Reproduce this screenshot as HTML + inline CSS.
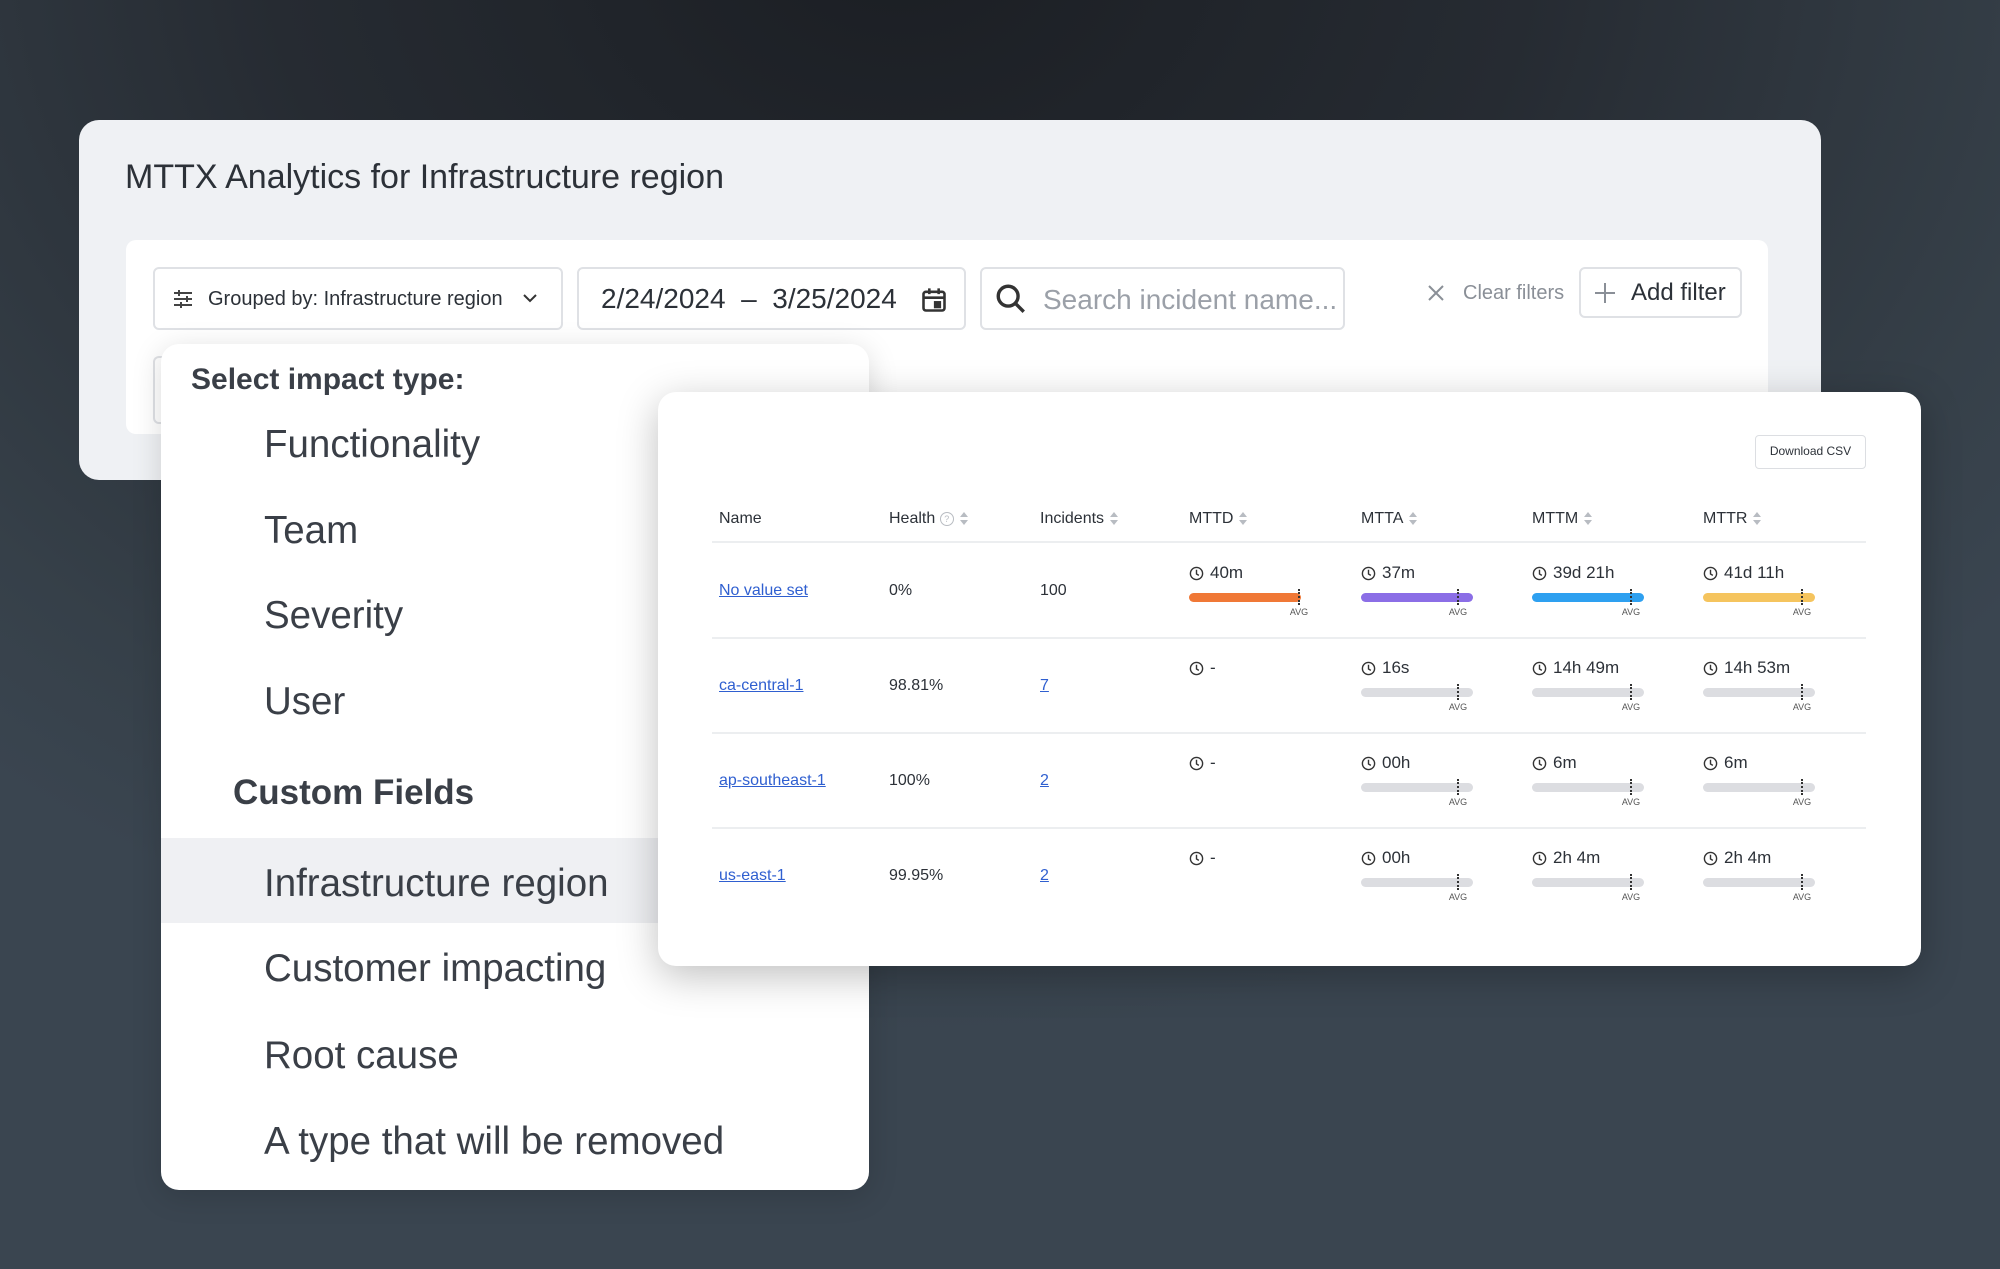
<!DOCTYPE html>
<html><head><meta charset="utf-8"><style>
*{margin:0;padding:0;box-sizing:border-box}
body{width:2000px;height:1269px;overflow:hidden;position:relative;font-family:"Liberation Sans",sans-serif;color:#353a42;
background:radial-gradient(ellipse 1400px 1100px at 45% -5%,#1b1e23 0%,#262b32 45%,#364049 85%,#3a4550 100%)}
.a{position:absolute;white-space:nowrap}
.main{left:79px;top:120px;width:1742px;height:360px;background:#eff1f4;border-radius:20px}
.card{left:126px;top:240px;width:1642px;height:194px;background:#fff;border-radius:10px}
.box{background:#fff;border:2px solid #dfe1e5;border-radius:6px}
.menu{left:161px;top:344px;width:708px;height:846px;background:#fff;border-radius:18px;box-shadow:0 6px 30px rgba(0,0,0,.15)}
.it{font-size:38.5px;color:#3a3f47;transform:translateY(-50%)}
.tbl{left:658px;top:392px;width:1263px;height:574px;background:#fff;border-radius:18px;box-shadow:0 10px 40px rgba(0,0,0,.25)}
.h{font-size:16px;color:#2c3138;transform:translateY(-50%)}
.c{font-size:16px;color:#2c3138;transform:translateY(-50%)}
.lk{color:#2f5fd0;text-decoration:underline}
.line{height:2px;background:#eceef0;left:712px;width:1154px}
.mv{font-size:17px;color:#2c3138;transform:translateY(-50%);display:flex;align-items:center;gap:6px}
.bar{height:9px;width:112px;border-radius:5px;background:#dcdde1}
.avg{font-size:9px;color:#555;transform:translateX(-50%)}
.mk{width:0;height:16px;border-left:2px dotted #333}
.srt{display:inline-block;vertical-align:middle;margin-left:6px;width:8px;height:14px;position:relative}
.srt:before{content:"";position:absolute;left:0;top:0;border:4px solid transparent;border-bottom:5px solid #b8bcc2;border-top:0}
.srt:after{content:"";position:absolute;left:0;top:8px;border:4px solid transparent;border-top:5px solid #b8bcc2;border-bottom:0}
</style></head><body>
<div class="a main"></div>
<div class="a" style="left:125px;top:158px;font-size:34px;color:#2c3138">MTTX Analytics for Infrastructure region</div>
<div class="a card"></div>
<div class="a box" style="left:153px;top:267px;width:410px;height:63px"></div>
<svg class="a" style="left:172px;top:288px" width="22" height="22" viewBox="0 0 22 22" fill="none" stroke="#444" stroke-width="2"><path d="M2 5h18M2 11h18M2 17h18M7 2v6M15 8v6M9 14v6"/></svg>
<div class="a" style="left:208px;top:288px;font-size:20px;color:#2c3138">Grouped by: Infrastructure region</div>
<svg class="a" style="left:522px;top:292px" width="16" height="12" viewBox="0 0 16 12" fill="none" stroke="#333" stroke-width="2"><path d="M2 3l6 6 6-6"/></svg>
<div class="a box" style="left:577px;top:267px;width:389px;height:63px"></div>
<div class="a" style="left:601px;top:283px;font-size:28px;color:#2c3138">2/24/2024 &nbsp;–&nbsp; 3/25/2024</div>
<svg class="a" style="left:920px;top:286px" width="28" height="28" viewBox="0 0 24 24" fill="none" stroke="#333" stroke-width="2.2"><rect x="3" y="5" width="18" height="16" rx="2"/><path d="M3 10h18M8 2v5M16 2v5"/><rect x="13" y="14" width="4" height="4" fill="#333"/></svg>
<div class="a box" style="left:980px;top:267px;width:365px;height:63px"></div>
<svg class="a" style="left:994px;top:282px" width="34" height="34" viewBox="0 0 24 24" fill="none" stroke="#333" stroke-width="2.4"><circle cx="10" cy="10" r="7"/><path d="M15 15l6 6"/></svg>
<div class="a" style="left:1043px;top:284px;font-size:28px;color:#9ba0a8">Search incident name...</div>
<svg class="a" style="left:1427px;top:284px" width="18" height="18" viewBox="0 0 18 18" stroke="#8a8f97" stroke-width="2"><path d="M2 2l14 14M16 2L2 16"/></svg>
<div class="a" style="left:1463px;top:282px;font-size:20px;color:#8a8f97">Clear filters</div>
<div class="a box" style="left:1579px;top:267px;width:163px;height:51px"></div>
<svg class="a" style="left:1594px;top:282px" width="22" height="22" viewBox="0 0 22 22" stroke="#8a8f97" stroke-width="2"><path d="M11 1v20M1 11h20"/></svg>
<div class="a" style="left:1631px;top:279px;font-size:24px;color:#2c3138">Add filter</div>
<div class="a box" style="left:153px;top:356px;width:30px;height:68px;border-right:none"></div>

<div class="a menu"></div>
<div class="a" style="left:161px;top:838px;width:500px;height:85px;background:#eff0f3"></div>
<div class="a" style="left:191px;top:380px;font-size:30px;font-weight:bold;color:#3a3f47;transform:translateY(-50%)">Select impact type:</div>
<div class="a it" style="left:264px;top:445px">Functionality</div>
<div class="a it" style="left:264px;top:531px">Team</div>
<div class="a it" style="left:264px;top:616px">Severity</div>
<div class="a it" style="left:264px;top:702px">User</div>
<div class="a it" style="left:233px;top:793px;font-weight:bold;font-size:35px">Custom Fields</div>
<div class="a it" style="left:264px;top:884px">Infrastructure region</div>
<div class="a it" style="left:264px;top:969px">Customer impacting</div>
<div class="a it" style="left:264px;top:1056px">Root cause</div>
<div class="a it" style="left:264px;top:1142px">A type that will be removed</div>

<div class="a tbl"></div>
<div class="a" style="left:1755px;top:435px;width:111px;height:34px;border:1.5px solid #dcdee2;border-radius:4px;font-size:12px;color:#2c3138;text-align:center;line-height:31px">Download CSV</div>
<div class="a h" style="left:719px;top:519px">Name</div>
<div class="a h" style="left:889px;top:519px">Health <span style="display:inline-block;width:14px;height:14px;border:1px solid #b8bcc2;border-radius:50%;font-size:9px;color:#b8bcc2;text-align:center;line-height:12px;vertical-align:middle">?</span><span class="srt"></span></div>
<div class="a h" style="left:1040px;top:519px">Incidents<span class="srt"></span></div>
<div class="a h" style="left:1189px;top:519px">MTTD<span class="srt"></span></div>
<div class="a h" style="left:1361px;top:519px">MTTA<span class="srt"></span></div>
<div class="a h" style="left:1532px;top:519px">MTTM<span class="srt"></span></div>
<div class="a h" style="left:1703px;top:519px">MTTR<span class="srt"></span></div>
<div class="a line" style="top:541px"></div>
<div class="a line" style="top:637px"></div>
<div class="a line" style="top:732px"></div>
<div class="a line" style="top:827px"></div>

<div class="a c lk" style="left:719px;top:591px">No value set</div>
<div class="a c" style="left:889px;top:591px">0%</div>
<div class="a c" style="left:1040px;top:591px">100</div>
<div class="a c lk" style="left:719px;top:686px">ca-central-1</div>
<div class="a c" style="left:889px;top:686px">98.81%</div>
<div class="a c lk" style="left:1040px;top:686px">7</div>
<div class="a c lk" style="left:719px;top:781px">ap-southeast-1</div>
<div class="a c" style="left:889px;top:781px">100%</div>
<div class="a c lk" style="left:1040px;top:781px">2</div>
<div class="a c lk" style="left:719px;top:876px">us-east-1</div>
<div class="a c" style="left:889px;top:876px">99.95%</div>
<div class="a c lk" style="left:1040px;top:876px">2</div>

<svg width="0" height="0" style="position:absolute"><defs><symbol id="clk" viewBox="0 0 16 16"><circle cx="8" cy="8" r="6.5" fill="none" stroke="#333" stroke-width="1.5"/><path d="M8 4v4.5l2.5 1.5" fill="none" stroke="#333" stroke-width="1.5"/></symbol></defs></svg>

<div class="a mv" style="left:1189px;top:573px"><svg width="15" height="15"><use href="#clk"/></svg>40m</div>
<div class="a bar" style="left:1189px;top:593px;background:#f07836"></div><div class="a mk" style="left:1298px;top:589px"></div><div class="a avg" style="left:1299px;top:607px">AVG</div>
<div class="a mv" style="left:1361px;top:573px"><svg width="15" height="15"><use href="#clk"/></svg>37m</div>
<div class="a bar" style="left:1361px;top:593px;background:#8b6ee6"></div><div class="a mk" style="left:1457px;top:589px"></div><div class="a avg" style="left:1458px;top:607px">AVG</div>
<div class="a mv" style="left:1532px;top:573px"><svg width="15" height="15"><use href="#clk"/></svg>39d 21h</div>
<div class="a bar" style="left:1532px;top:593px;background:#2ea0f0"></div><div class="a mk" style="left:1630px;top:589px"></div><div class="a avg" style="left:1631px;top:607px">AVG</div>
<div class="a mv" style="left:1703px;top:573px"><svg width="15" height="15"><use href="#clk"/></svg>41d 11h</div>
<div class="a bar" style="left:1703px;top:593px;background:#f5c45e"></div><div class="a mk" style="left:1801px;top:589px"></div><div class="a avg" style="left:1802px;top:607px">AVG</div>

<div class="a mv" style="left:1189px;top:668px"><svg width="15" height="15"><use href="#clk"/></svg>-</div>
<div class="a mv" style="left:1361px;top:668px"><svg width="15" height="15"><use href="#clk"/></svg>16s</div>
<div class="a bar" style="left:1361px;top:688px"></div><div class="a mk" style="left:1457px;top:684px"></div><div class="a avg" style="left:1458px;top:702px">AVG</div>
<div class="a mv" style="left:1532px;top:668px"><svg width="15" height="15"><use href="#clk"/></svg>14h 49m</div>
<div class="a bar" style="left:1532px;top:688px"></div><div class="a mk" style="left:1630px;top:684px"></div><div class="a avg" style="left:1631px;top:702px">AVG</div>
<div class="a mv" style="left:1703px;top:668px"><svg width="15" height="15"><use href="#clk"/></svg>14h 53m</div>
<div class="a bar" style="left:1703px;top:688px"></div><div class="a mk" style="left:1801px;top:684px"></div><div class="a avg" style="left:1802px;top:702px">AVG</div>

<div class="a mv" style="left:1189px;top:763px"><svg width="15" height="15"><use href="#clk"/></svg>-</div>
<div class="a mv" style="left:1361px;top:763px"><svg width="15" height="15"><use href="#clk"/></svg>00h</div>
<div class="a bar" style="left:1361px;top:783px"></div><div class="a mk" style="left:1457px;top:779px"></div><div class="a avg" style="left:1458px;top:797px">AVG</div>
<div class="a mv" style="left:1532px;top:763px"><svg width="15" height="15"><use href="#clk"/></svg>6m</div>
<div class="a bar" style="left:1532px;top:783px"></div><div class="a mk" style="left:1630px;top:779px"></div><div class="a avg" style="left:1631px;top:797px">AVG</div>
<div class="a mv" style="left:1703px;top:763px"><svg width="15" height="15"><use href="#clk"/></svg>6m</div>
<div class="a bar" style="left:1703px;top:783px"></div><div class="a mk" style="left:1801px;top:779px"></div><div class="a avg" style="left:1802px;top:797px">AVG</div>

<div class="a mv" style="left:1189px;top:858px"><svg width="15" height="15"><use href="#clk"/></svg>-</div>
<div class="a mv" style="left:1361px;top:858px"><svg width="15" height="15"><use href="#clk"/></svg>00h</div>
<div class="a bar" style="left:1361px;top:878px"></div><div class="a mk" style="left:1457px;top:874px"></div><div class="a avg" style="left:1458px;top:892px">AVG</div>
<div class="a mv" style="left:1532px;top:858px"><svg width="15" height="15"><use href="#clk"/></svg>2h 4m</div>
<div class="a bar" style="left:1532px;top:878px"></div><div class="a mk" style="left:1630px;top:874px"></div><div class="a avg" style="left:1631px;top:892px">AVG</div>
<div class="a mv" style="left:1703px;top:858px"><svg width="15" height="15"><use href="#clk"/></svg>2h 4m</div>
<div class="a bar" style="left:1703px;top:878px"></div><div class="a mk" style="left:1801px;top:874px"></div><div class="a avg" style="left:1802px;top:892px">AVG</div>
</body></html>
